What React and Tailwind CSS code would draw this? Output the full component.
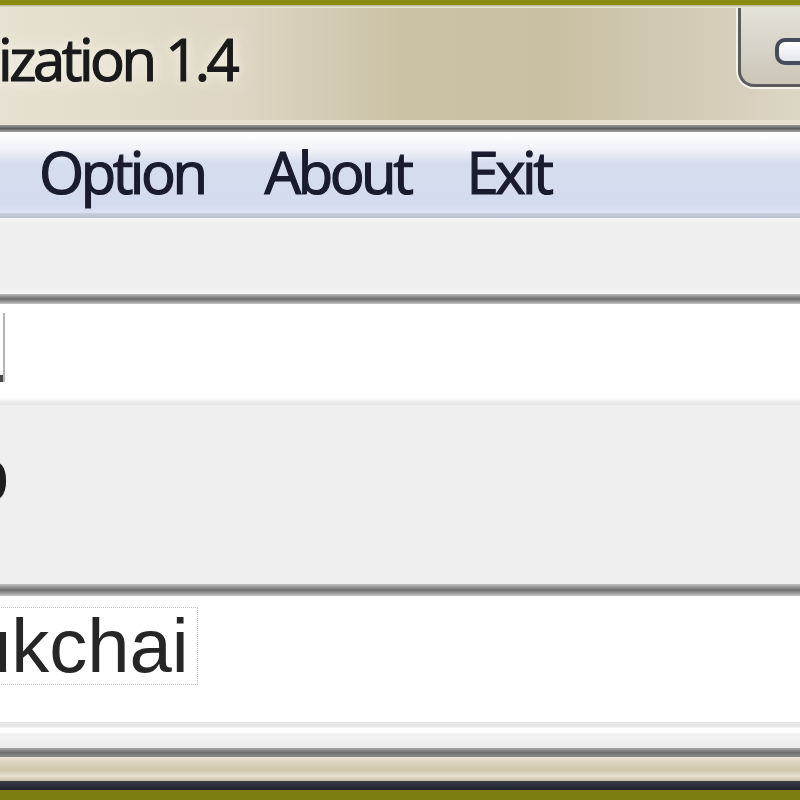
const Rule = ({ className }) => <div className={`shrink-0 w-full ${className}`} />;

const TitleBar = () => (
	<div className="relative flex items-start h-[112px] shrink-0 bg-[linear-gradient(to_right,#e6e1d2_0%,#ddd6c3_30%,#cbc2a6_50%,#c9c0a4_70%,#d6cfbb_92%,#dcd6c5_100%)]">
		<div className="pt-[22px] -ml-[34px] text-[58px] leading-[58px] tracking-[-0.06em] text-[#1a1a1a] [-webkit-text-stroke:1.2px_#1a1a1a] whitespace-nowrap font-['Segoe_UI','Open_Sans',sans-serif] [text-shadow:0_0_12px_#fbf8ef,0_0_26px_#f3efe3]">
			nization 1.4
		</div>
		<div className="ml-auto mr-[-32px] w-[96px] h-[81px] shrink-0 rounded-bl-[18px] border-l-2 border-b-2 border-[#f3f1ea]">
			<div className="h-full w-full rounded-bl-[16px] border-l-[3px] border-b-[3px] border-[#5c5c5c] bg-linear-to-b from-[#e4e1d9] to-[#cbc6b8] pt-[30px] pl-[34px]">
				<div className="h-[27px] w-[80px] rounded-[10px] border-[4px] border-[#464b5c] bg-linear-to-b from-[#ffffff] to-[#e4e6ee]" />
			</div>
		</div>
	</div>
);

const MenuBar = () => (
	<div className="flex h-[81px] shrink-0 pt-[11px] pl-[39px] bg-[linear-gradient(to_bottom,#ffffff_0%,#f0f2f8_22%,#d6ddee_38%,#d4dbee_90%,#dde2f3_100%)] text-[58px] leading-[58px] tracking-[-0.06em] text-[#1b1b2e] [-webkit-text-stroke:1.2px_#1b1b2e] font-['Segoe_UI','Open_Sans',sans-serif] whitespace-nowrap">
		<span>Option</span>
		<span className="ml-[60px]">About</span>
		<span className="ml-[56px]">Exit</span>
	</div>
);

export default function App() {
	return (
		<div className="w-[800px] h-[800px] overflow-hidden flex flex-col bg-[#efefef] font-['Liberation_Sans',Arial,sans-serif]">
			<Rule className="h-[5px] bg-[#8a8b14]" />
			<Rule className="h-[3px] bg-linear-to-b from-[#b9b48f] to-[#f1ede3]" />
			<TitleBar />
			<Rule className="h-[5px] bg-[#e4dfcf]" />
			<Rule className="h-[7px] bg-linear-to-b from-[#9a9a9a] via-[#5e5e5e] to-[#a8a8a8]" />
			<MenuBar />
			<Rule className="h-[5px] bg-linear-to-b from-[#c9cfdb] to-[#b8bfcc]" />

			<div className="h-[76px] shrink-0 bg-[linear-gradient(to_bottom,#f6f6f6_0%,#efefef_8%,#efefef_90%,#f7f7f7_100%)]" />
			<Rule className="h-[10px] bg-linear-to-b from-[#bdbdbd] via-[#6c6c6c] to-[#c4c4c4]" />

			<div className="flex items-start h-[94px] shrink-0 bg-white pt-[9px]">
				<div className="flex items-end h-[69px]">
					<div className="w-[3px] h-[7px] bg-[#4a4a4a]" />
					<div className="w-[2px] h-full bg-[#b4b4b4]" />
				</div>
			</div>
			<Rule className="h-[7px] bg-linear-to-b from-[#fafafa] to-[#e2e2e2]" />

			<div className="h-[179px] shrink-0 bg-[#efefef] pt-[32px] text-[76px] leading-none text-[#1e1e1e]">
				<span className="block -ml-[33px]">o</span>
			</div>
			<Rule className="h-[12px] bg-linear-to-b from-[#c2c2c2] via-[#6e6e6e] to-[#c8c8c8]" />

			<div className="h-[126px] shrink-0 bg-white pt-[11px] text-[76px] leading-none text-[#262626]">
				<span className="inline-block -ml-[32px] pr-[8px] border border-dotted border-[#c4c4c4]">ukchai</span>
			</div>
			<Rule className="h-[26px] bg-[linear-gradient(to_bottom,#e6e6e6_0%,#e6e6e6_20%,#ffffff_22%,#ffffff_40%,#f4f4f4_45%,#ebebeb_100%)]" />
			<Rule className="h-[9px] bg-linear-to-b from-[#a8a8a8] via-[#6f6f6f] to-[#8c8c8c]" />
			<Rule className="h-[24px] bg-[linear-gradient(to_bottom,#ece6d6_0%,#ddd5bf_20%,#cfc6ab_55%,#e6e0cf_80%,#c8c0a8_100%)]" />
			<Rule className="h-[9px] bg-linear-to-b from-[#3a3c46] to-[#1f2130]" />
			<Rule className="h-[10px] bg-[#7d7e12]" />
		</div>
	);
}
